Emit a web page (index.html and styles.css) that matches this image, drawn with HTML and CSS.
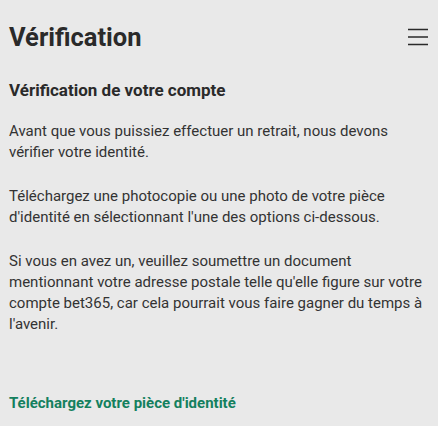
FILE: index.html
```html
<!DOCTYPE html>
<html lang="fr">
<head>
<meta charset="utf-8">
<link rel="stylesheet" href="styles.css">
</head>
<body>
<div class="page">
  <header class="header">
    <h1 class="title">Vérification</h1>
    <button class="menu" aria-label="Menu">
      <svg width="20" height="18" viewBox="0 0 20 18"><path d="M0 1.5H20M0 9H20M0 16.5H20" stroke="#2a2a2a" stroke-width="1.4" fill="none"/></svg>
    </button>
  </header>
  <h2 class="subtitle">Vérification de votre compte</h2>
  <p class="text">Avant que vous puissiez effectuer un retrait, nous devons vérifier votre identité.</p>
  <p class="text">Téléchargez une photocopie ou une photo de votre pièce d'identité en sélectionnant l'une des options ci-dessous.</p>
  <p class="text">Si vous en avez un, veuillez soumettre un document mentionnant votre adresse postale telle qu'elle figure sur votre compte bet365, car cela pourrait vous faire gagner du temps à l'avenir.</p>
  <a class="link" href="#">Téléchargez votre pièce d'identité</a>
</div>
</body>
</html>
```
FILE: styles.css
```css
html, body {
  margin: 0;
  padding: 0;
  background: #e9e9e9;
}
body {
  font-family: Roboto, "Liberation Sans", sans-serif;
  color: #2e2e2e;
}
.page {
  padding: 0 9px;
}
.header {
  display: flex;
  align-items: center;
  justify-content: space-between;
  height: 74px;
}
.title {
  margin: 0;
  font-size: 25.5px;
  font-weight: 700;
  color: #2a2a2a;
}
.menu {
  border: 0;
  background: none;
  padding: 0;
  margin-right: 1px;
  display: flex;
}
.subtitle {
  margin: 6px 0 21px;
  font-size: 17px;
  font-weight: 700;
  color: #2a2a2a;
}
.text {
  margin: 0 0 23px;
  font-size: 15px;
  line-height: 21px;
  color: #333;
}
.link {
  display: block;
  margin-top: 59px;
  font-size: 15px;
  font-weight: 700;
  color: #14805e;
  text-decoration: none;
}
```
